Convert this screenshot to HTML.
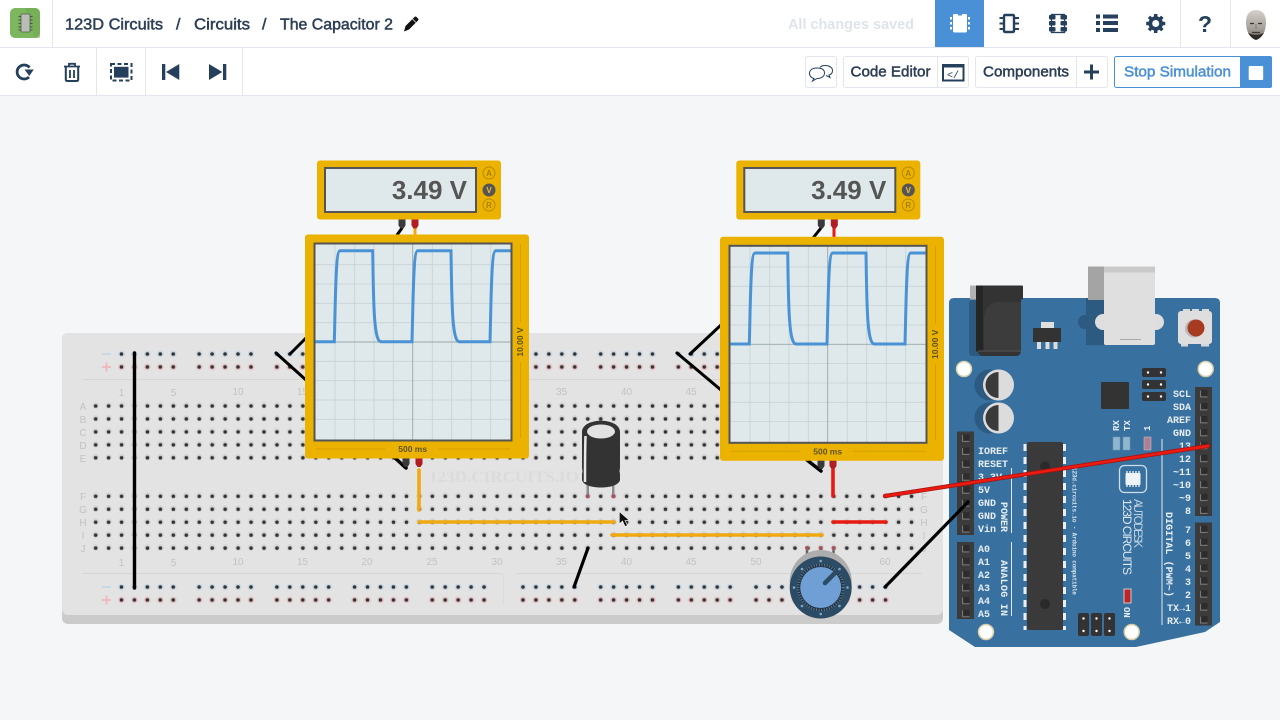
<!DOCTYPE html>
<html>
<head>
<meta charset="utf-8">
<title>123D Circuits</title>
<style>
html,body{margin:0;padding:0;background:#f5f6f8;width:1280px;height:720px;overflow:hidden}
svg{display:block}
.nav{font:16px "Liberation Sans",sans-serif;fill:#2c3e55;stroke:#2c3e55;stroke-width:.5}
.btn{font:15px "Liberation Sans",sans-serif;fill:#2c3e55;stroke:#2c3e55;stroke-width:.5}
.bb{font:10px "Liberation Sans",sans-serif;fill:#c2c2c2;text-anchor:middle}
.pin{font:bold 10px "Liberation Mono",monospace;fill:#e6edf3}
.r{text-anchor:end}
.met{font:bold 26px "Liberation Sans",sans-serif;fill:#555;text-anchor:end}
.mb{font:bold 8px "Liberation Sans",sans-serif;fill:#a87f00;text-anchor:middle}
.sc{font:bold 8.500px "Liberation Sans",sans-serif;fill:#5d5426;text-anchor:middle}
</style>
</head>
<body>
<svg width="1280" height="720" viewBox="0 0 1280 720" xmlns="http://www.w3.org/2000/svg">
<defs>
<linearGradient id="head" x1="0" y1="0" x2="0" y2="1"><stop offset="0" stop-color="#d6d0ca"/><stop offset=".6" stop-color="#a8a29c"/><stop offset="1" stop-color="#6e6964"/></linearGradient>
<pattern id="holes" patternUnits="userSpaceOnUse" x="89.2" y="399.5" width="12.95" height="12.95">
<circle cx="6.47" cy="6" r="3.2" fill="#d3d3d3"/><circle cx="6.47" cy="6.47" r="1.8" fill="#333"/>
</pattern>
<pattern id="holes2" patternUnits="userSpaceOnUse" x="89.2" y="489.8" width="12.95" height="12.95">
<circle cx="6.47" cy="6" r="3.2" fill="#d3d3d3"/><circle cx="6.47" cy="6.47" r="1.8" fill="#333"/>
</pattern>
<pattern id="railT" patternUnits="userSpaceOnUse" x="115" y="347.5" width="77.7" height="25.9">
<circle cx="6.47" cy="6.47" r="3.4" fill="#c9d8e4"/><circle cx="19.42" cy="6.47" r="3.4" fill="#c9d8e4"/><circle cx="32.37" cy="6.47" r="3.4" fill="#c9d8e4"/><circle cx="45.32" cy="6.47" r="3.4" fill="#c9d8e4"/><circle cx="58.27" cy="6.47" r="3.4" fill="#c9d8e4"/>
<circle cx="6.47" cy="19.42" r="3.4" fill="#e6c2c5"/><circle cx="19.42" cy="19.42" r="3.4" fill="#e6c2c5"/><circle cx="32.37" cy="19.42" r="3.4" fill="#e6c2c5"/><circle cx="45.32" cy="19.42" r="3.4" fill="#e6c2c5"/><circle cx="58.27" cy="19.42" r="3.4" fill="#e6c2c5"/>
<g fill="#333"><circle cx="6.47" cy="6.47" r="1.8"/><circle cx="19.42" cy="6.47" r="1.8"/><circle cx="32.37" cy="6.47" r="1.8"/><circle cx="45.32" cy="6.47" r="1.8"/><circle cx="58.27" cy="6.47" r="1.8"/>
<circle cx="6.47" cy="19.42" r="1.8"/><circle cx="19.42" cy="19.42" r="1.8"/><circle cx="32.37" cy="19.42" r="1.8"/><circle cx="45.32" cy="19.42" r="1.8"/><circle cx="58.27" cy="19.42" r="1.8"/></g>
</pattern>
<pattern id="railB" patternUnits="userSpaceOnUse" x="115" y="580.5" width="77.7" height="25.9">
<circle cx="6.47" cy="6.47" r="3.4" fill="#c9d8e4"/><circle cx="19.42" cy="6.47" r="3.4" fill="#c9d8e4"/><circle cx="32.37" cy="6.47" r="3.4" fill="#c9d8e4"/><circle cx="45.32" cy="6.47" r="3.4" fill="#c9d8e4"/><circle cx="58.27" cy="6.47" r="3.4" fill="#c9d8e4"/>
<circle cx="6.47" cy="19.42" r="3.4" fill="#e6c2c5"/><circle cx="19.42" cy="19.42" r="3.4" fill="#e6c2c5"/><circle cx="32.37" cy="19.42" r="3.4" fill="#e6c2c5"/><circle cx="45.32" cy="19.42" r="3.4" fill="#e6c2c5"/><circle cx="58.27" cy="19.42" r="3.4" fill="#e6c2c5"/>
<g fill="#333"><circle cx="6.47" cy="6.47" r="1.8"/><circle cx="19.42" cy="6.47" r="1.8"/><circle cx="32.37" cy="6.47" r="1.8"/><circle cx="45.32" cy="6.47" r="1.8"/><circle cx="58.27" cy="6.47" r="1.8"/>
<circle cx="6.47" cy="19.42" r="1.8"/><circle cx="19.42" cy="19.42" r="1.8"/><circle cx="32.37" cy="19.42" r="1.8"/><circle cx="45.32" cy="19.42" r="1.8"/><circle cx="58.27" cy="19.42" r="1.8"/></g>
</pattern>
<pattern id="hdr" patternUnits="userSpaceOnUse" width="17" height="12.95" x="0" y="0" patternTransform="translate(0 0.5)">
<rect width="17" height="12.95" fill="#3b3b3b"/><rect x="4.5" y="2.5" width="8" height="8" fill="#2c2c2c"/><path d="M5.5 3v6.5h7" fill="none" stroke="#777" stroke-width="1.2"/>
</pattern>
</defs>

<rect width="1280" height="720" fill="#f5f6f8"/>

<!-- BREADBOARD -->
<rect x="62" y="333" width="881" height="291" rx="6" fill="#cbcbcb"/>
<rect x="62" y="333" width="881" height="282" rx="6" fill="#e3e3e3"/>
<path d="M83 379.5H922M83 573.5H502M517 573.5H922" stroke="#d6d6d6" stroke-width="1"/>
<path d="M503.5 574V604" stroke="#dbdbdb"/>
<rect x="89.2" y="399.5" width="828.8" height="64.75" fill="url(#holes)"/>
<rect x="89.2" y="489.8" width="828.8" height="64.75" fill="url(#holes2)"/>
<rect x="115" y="347.5" width="388.5" height="25.9" fill="url(#railT)"/>
<rect x="115" y="580.5" width="388.5" height="25.9" fill="url(#railB)"/>
<g transform="translate(401.5 0)">
<rect x="115" y="347.5" width="388.5" height="25.9" fill="url(#railT)"/>
<rect x="115" y="580.5" width="388.5" height="25.9" fill="url(#railB)"/>
</g>
<path d="M102 354H111M102 587H111" stroke="#bcd3e6" stroke-width="1.6"/>
<path d="M102 367H111M106.500 362.500V371.500M102 600H111M106.500 595.500V604.500" stroke="#eeb6b8" stroke-width="1.8"/>
<g class="bb">
<text x="83" y="410">A</text><text x="83" y="423">B</text><text x="83" y="436">C</text><text x="83" y="449">D</text><text x="83" y="462">E</text>
<text x="83" y="500">F</text><text x="83" y="513">G</text><text x="83" y="526">H</text><text x="83" y="539">I</text><text x="83" y="552">J</text>
<text x="924" y="500">F</text><text x="924" y="513">G</text><text x="924" y="526">H</text><text x="924" y="539">I</text><text x="924" y="552">J</text>
<text x="121.500" y="396">1</text><text x="173.500" y="396">5</text><text x="238" y="395">10</text><text x="302.500" y="395">15</text><text x="561.500" y="395">35</text><text x="626.500" y="395">40</text><text x="691" y="395">45</text>
<text x="121.500" y="566">1</text><text x="173.500" y="566">5</text><text x="238" y="565">10</text><text x="302.500" y="565">15</text><text x="367" y="565">20</text><text x="432" y="565">25</text><text x="497" y="565">30</text><text x="561.500" y="565">35</text><text x="626.500" y="565">40</text><text x="691" y="565">45</text><text x="756" y="565">50</text><text x="885" y="565">60</text>
</g>
<text x="429" y="482" font-family="Liberation Serif,serif" font-weight="bold" font-size="16" fill="#dbdbdb" textLength="150" lengthAdjust="spacingAndGlyphs">123D.CIRCUITS.IO</text>

<!-- WIRES on board -->
<g fill="none" stroke-linecap="round">
<path d="M134.500 353V588" stroke="#000" stroke-width="3.400"/>
<path d="M290 354L306 338M276 353L306 380M690 354L721 325M677 353L721 390" stroke="#000" stroke-width="3"/>
<path d="M574 587L588 548" stroke="#000" stroke-width="3.200"/>
<path d="M419 470V510M419 522H614M612 535H822" stroke="#f0a910" stroke-width="3.600"/>
<path d="M833 470V496M833 522H886" stroke="#e81a10" stroke-width="3.600"/>
<path d="M394 457L406 468M807 460L821 471" stroke="#000" stroke-width="3.500"/>
</g>

<!-- CAPACITOR -->
<rect x="586.500" y="480" width="2.500" height="16" fill="#8c8c8c"/><rect x="612" y="480" width="2.500" height="16" fill="#8c8c8c"/>
<circle cx="587.700" cy="496.300" r="2" fill="#a5555f"/><circle cx="613.300" cy="496.300" r="2" fill="#a5555f"/>
<path d="M582 432C582 417 620 417 620 432V468L619.500 471L620 474V480C618 490 584 490 582 480V474L582.500 471L582 468Z" fill="#333"/>
<ellipse cx="601" cy="431.500" rx="14" ry="7" fill="#e2e2e2"/>
<path d="M585.500 436C585 450 585 465 585 482" stroke="#e8e8e8" stroke-width="2.500" fill="none"/>

<!-- POTENTIOMETER -->
<path d="M807 550V565M821 549V565M833.500 550V565" stroke="#666" stroke-width="2.500"/>
<circle cx="807" cy="548" r="2" fill="#a5555f"/><circle cx="820.700" cy="548" r="2" fill="#a5555f"/><circle cx="833.700" cy="548" r="2" fill="#a5555f"/>
<circle cx="820.700" cy="581" r="31" fill="#adadad"/>
<circle cx="820.700" cy="587.500" r="31" fill="#2c4c66"/>
<circle cx="820.700" cy="587.500" r="23.500" fill="#1f3344"/>
<circle cx="820.700" cy="587.500" r="22.500" fill="none" stroke="#8fa9bd" stroke-width="2.500" stroke-dasharray="1 1.600" opacity=".6"/>
<circle cx="820.700" cy="587.500" r="20.500" fill="#6f9fd5"/>
<path d="M825 583L838 570" stroke="#2c4c66" stroke-width="4.500" stroke-linecap="round"/>
<g fill="#7fa6c4"><circle cx="820.700" cy="561" r="1.300"/><circle cx="820.700" cy="614" r="1.300"/><circle cx="794" cy="587.500" r="1.300"/><circle cx="847.500" cy="587.500" r="1.300"/><circle cx="802" cy="569" r="1.300"/><circle cx="839.500" cy="569" r="1.300"/><circle cx="802" cy="606" r="1.300"/><circle cx="839.500" cy="606" r="1.300"/></g>

<!-- ARDUINO -->
<path d="M949 303Q949 298 954 298H1215Q1220 298 1220 303V622L1205 632L1136 647H975L949 630Z" fill="#38709f"/>
<circle cx="1085" cy="322" r="7" fill="#2c5a80"/>
<rect x="1086" y="298" width="18" height="47" fill="#2c5a80"/>
<circle cx="1103" cy="322" r="8" fill="#dedede"/><circle cx="1156" cy="322" r="8" fill="#dedede"/>
<rect x="1088" y="266.500" width="18" height="33.500" fill="#a4a4a4"/>
<rect x="1104" y="266.500" width="51" height="78.500" rx="2" fill="#dfdfdf"/>
<rect x="1104" y="266.500" width="51" height="6" fill="#c9c9c9"/>
<path d="M1120 339.500H1141" stroke="#a8a8a8"/>
<!-- jack -->
<rect x="969" y="300" width="30" height="56" rx="3" fill="#2c5a80"/>
<rect x="970" y="285.500" width="12" height="14" fill="#b2b2b2"/>
<rect x="976" y="285.500" width="47" height="14" rx="1" fill="#333"/>
<path d="M978 299H1021V350Q1021 356 1016 356H983Q978 356 978 350Z" fill="#333"/>
<rect x="976" y="285.500" width="7" height="66" fill="#252525"/>
<path d="M984 350V320Q984 302 1000 302H1021V350Z" fill="#3c3c3c"/>
<path d="M978 351H1021" stroke="#666" stroke-width=".8"/>
<!-- regulator -->
<rect x="1041" y="322" width="13" height="7" fill="#dfdfdf"/>
<rect x="1033" y="328" width="28" height="14" fill="#333"/>
<path d="M1039 342v7M1047.500 342v7M1055.500 342v7" stroke="#ddd" stroke-width="4"/>
<!-- reset -->
<path d="M1183 309h7v3h-7zM1192 309h7v3h-7zM1202 309h7v3h-7zM1181 343h7v3.500h-7zM1201 343h8v3.500h-8z" fill="#d8d8d8"/>
<rect x="1178" y="311" width="34" height="33" rx="3" fill="#dedede"/>
<circle cx="1194" cy="328.500" r="9" fill="#bababa"/><circle cx="1196" cy="328" r="8.500" fill="#a63b22"/>
<!-- mount holes -->
<g fill="#fff" stroke="#d6cfa8" stroke-width="1.500"><circle cx="964" cy="369" r="7.500"/><circle cx="1205.700" cy="369" r="7.500"/><circle cx="986" cy="632" r="7.500"/><circle cx="1131.700" cy="632" r="7.500"/></g>
<!-- caps -->
<circle cx="990" cy="385" r="15.500" fill="#2c5a80"/><circle cx="990" cy="418" r="15.500" fill="#2c5a80"/>
<circle cx="998.500" cy="385" r="15.500" fill="#dcdcdc"/><path d="M998.500 372A13 13 0 0 0 998.500 398Z" fill="#3a3a3a"/>
<circle cx="998.500" cy="418" r="15.500" fill="#dcdcdc"/><path d="M998.500 405A13 13 0 0 0 998.500 431Z" fill="#3a3a3a"/>
<!-- small chip, headers -->
<rect x="1101" y="382" width="28" height="27" rx="1" fill="#333"/>
<g fill="#333"><rect x="1142" y="368" width="24" height="9" rx="2"/><rect x="1142" y="380" width="24" height="9" rx="2"/><rect x="1142" y="392" width="24" height="9" rx="2"/></g>
<g fill="#fff"><circle cx="1148" cy="372.500" r="1.200"/><circle cx="1161" cy="372.500" r="1.200"/><circle cx="1148" cy="384.500" r="1.200"/><circle cx="1161" cy="384.500" r="1.200"/><circle cx="1148" cy="396.500" r="1.200"/><circle cx="1161" cy="396.500" r="1.200"/></g>
<!-- pin headers -->
<g transform="translate(1195 387)"><rect width="17" height="129" fill="url(#hdr)"/></g>
<g transform="translate(1195 522.500)"><rect width="17" height="103" fill="url(#hdr)"/></g>
<g transform="translate(957 431.500)"><rect width="17" height="103.500" fill="url(#hdr)"/></g>
<g transform="translate(957 542)"><rect width="17" height="77" fill="url(#hdr)"/></g>
<!-- main chip -->
<path d="M1025 444V630M1064.500 444V630" stroke="#e8eef2" stroke-width="3" stroke-dasharray="7 6"/>
<rect x="1027" y="442" width="36" height="188" rx="2" fill="#3a3a3a"/>
<circle cx="1045" cy="466.500" r="5" fill="#2a2a2a"/><circle cx="1045" cy="604" r="5" fill="#2a2a2a"/>
<!-- leds -->
<rect x="1113" y="437" width="7" height="13" fill="#8fb6cd" stroke="#6c98b4" stroke-width=".5"/><rect x="1123" y="437" width="7" height="13" fill="#8fb6cd" stroke="#6c98b4" stroke-width=".5"/>
<rect x="1144" y="437" width="7" height="13" fill="#ae7f93" stroke="#ccc" stroke-width=".5"/>
<rect x="1124" y="589" width="7" height="14" fill="#c02424" stroke="#ccc" stroke-width="1"/>
<!-- bottom headers -->
<g fill="#333"><rect x="1078" y="613" width="11" height="23" rx="2"/><rect x="1091" y="613" width="11" height="23" rx="2"/><rect x="1104" y="613" width="11" height="23" rx="2"/></g>
<g fill="#fff"><circle cx="1083.500" cy="618.500" r="1.200"/><circle cx="1083.500" cy="631" r="1.200"/><circle cx="1096.500" cy="618.500" r="1.200"/><circle cx="1096.500" cy="631" r="1.200"/><circle cx="1109.500" cy="618.500" r="1.200"/><circle cx="1109.500" cy="631" r="1.200"/></g>
<path d="M1162 439V625M1011.500 468V533M1011.500 542V616" stroke="#dfe8ef" stroke-width="1"/>
<!-- logo -->
<rect x="1119.500" y="465.500" width="27" height="27" rx="5" fill="none" stroke="#cfdde8" stroke-width="1.300"/>
<rect x="1125.500" y="473" width="15" height="12" rx="1" fill="#eef3f7"/>
<path d="M1127 471v16M1130 471v16M1133 471v16M1136 471v16M1139 471v16" stroke="#eef3f7" stroke-width="1.300" stroke-dasharray="2 12"/>
<!-- labels -->
<g class="pin r">
<text x="1191" y="397">SCL</text><text x="1191" y="410">SDA</text><text x="1191" y="423">AREF</text><text x="1191" y="436">GND</text><text x="1191" y="449">13</text><text x="1191" y="462">12</text><text x="1191" y="475">~11</text><text x="1191" y="488">~10</text><text x="1191" y="501">~9</text><text x="1191" y="514">8</text>
<text x="1191" y="533">7</text><text x="1191" y="546">6</text><text x="1191" y="559">5</text><text x="1191" y="572">4</text><text x="1191" y="585">3</text><text x="1191" y="598">2</text><text x="1191" y="611">TX→1</text><text x="1191" y="624">RX←0</text>
</g>
<g class="pin">
<text x="978" y="454">IOREF</text><text x="978" y="467">RESET</text><text x="978" y="480">3.3V</text><text x="978" y="493">5V</text><text x="978" y="506">GND</text><text x="978" y="519">GND</text><text x="978" y="532">Vin</text>
<text x="978" y="552">A0</text><text x="978" y="565">A1</text><text x="978" y="578">A2</text><text x="978" y="591">A3</text><text x="978" y="604">A4</text><text x="978" y="617">A5</text>
<text transform="translate(1001 502) rotate(90)">POWER</text>
<text transform="translate(1001 560) rotate(90)" textLength="56">ANALOG IN</text>
<text transform="translate(1166 512) rotate(90)" textLength="85">DIGITAL (PWM~)</text>
<text transform="translate(1124 607) rotate(90)" font-size="9">ON</text>
<text transform="translate(1119 431) rotate(-90)" font-size="9">RX</text>
<text transform="translate(1130 431) rotate(-90)" font-size="9">TX</text>
<text transform="translate(1150 431) rotate(-90)" font-size="9">1</text>
</g>
<text transform="translate(1072.500 467) rotate(90)" font-family="Liberation Mono,monospace" font-weight="bold" font-size="6" fill="#d7e3ec" textLength="128">123d.circuits.io - Arduino compatible</text>
<text transform="translate(1134 499) rotate(90)" font-family="Liberation Sans,sans-serif" font-size="11.500" fill="#bfd2e0" textLength="49">AUTODESK</text>
<text transform="translate(1123 499) rotate(90)" font-family="Liberation Sans,sans-serif" font-size="12" fill="#dfe9f0" textLength="76">123D CIRCUITS</text>

<!-- wires over arduino -->
<path d="M885 587L968 502" stroke="#000" stroke-width="3.200" stroke-linecap="round" fill="none"/>
<path d="M885 496L1208 446" stroke="#a31410" stroke-width="4.200" stroke-linecap="round"/>
<path d="M885 496L1208 446" stroke="#ee1a10" stroke-width="2.600" stroke-linecap="round"/>

<!-- probes -->
<path d="M402 228L397 235" stroke="#000" stroke-width="3"/>
<path d="M415 228V236" stroke="#f0a910" stroke-width="3"/>
<path d="M821 228L813 238" stroke="#000" stroke-width="3"/>
<path d="M834 228V238" stroke="#e81a10" stroke-width="3"/>
<path d="M398.500 219.500h7v6l-2 3h-3l-2-3z" fill="#3a3a3a"/><path d="M411.500 219.500h7v6l-2 3h-3l-2-3z" fill="#b01e24"/>
<path d="M817.800 219.500h7v6l-2 3h-3l-2-3z" fill="#3a3a3a"/><path d="M830.800 219.500h7v6l-2 3h-3l-2-3z" fill="#b01e24"/>
<path d="M402.500 458h7v6l-2 3h-3l-2-3z" fill="#3a3a3a"/><path d="M415.500 458h7v6l-2 3h-3l-2-3z" fill="#b01e24"/>
<path d="M817.500 460h7v6l-2 3h-3l-2-3z" fill="#3a3a3a"/><path d="M829.500 460h7v6l-2 3h-3l-2-3z" fill="#b01e24"/>

<!-- METERS -->
<rect x="317" y="160.500" width="184" height="59" rx="3" fill="#ecb200"/>
<rect x="325" y="168" width="151" height="44" fill="#dfe8ea" stroke="#555" stroke-width="2"/>
<text class="met" x="467" y="199">3.49 V</text>
<g fill="none" stroke="#b88a00" stroke-width="1"><circle cx="489" cy="173" r="6"/><circle cx="489" cy="205" r="6"/></g>
<circle cx="489" cy="190" r="6.500" fill="#555"/>
<text class="mb" x="489" y="176">A</text><text class="mb" x="489" y="193" style="fill:#e8c040">V</text><text class="mb" x="489" y="208">R</text>

<rect x="736.300" y="160.500" width="184" height="59" rx="3" fill="#ecb200"/>
<rect x="744.300" y="168" width="151" height="44" fill="#dfe8ea" stroke="#555" stroke-width="2"/>
<text class="met" x="886.300" y="199">3.49 V</text>
<g fill="none" stroke="#b88a00" stroke-width="1"><circle cx="908.300" cy="173" r="6"/><circle cx="908.300" cy="205" r="6"/></g>
<circle cx="908.300" cy="190" r="6.500" fill="#555"/>
<text class="mb" x="908.300" y="176">A</text><text class="mb" x="908.300" y="193" style="fill:#e8c040">V</text><text class="mb" x="908.300" y="208">R</text>

<!-- SCOPE 1 -->
<rect x="305" y="234.500" width="224" height="224" rx="3" fill="#ecb200"/>
<rect x="314.500" y="243.500" width="197" height="197" fill="#dfe8ea"/>
<path d="M335 244V440M354.700 244V440M374 244V440M393.300 244V440M432.300 244V440M451.700 244V440M471.300 244V440M490.700 244V440M315 264.700H511M315 284H511M315 303.300H511M315 322.700H511M315 361.300H511M315 380.700H511M315 400H511M315 419.300H511" stroke="#c6d2d5" stroke-width=".8"/>
<path d="M412.700 244V440M315 342H511" stroke="#9aa7a9" stroke-width=".9"/>
<rect x="314.500" y="243.500" width="197" height="197" fill="none" stroke="#555" stroke-width="2"/>
<path d="M315.500 341.700H334.300C335.500 300 335.500 250.700 340 250.700H372.700C373.500 300 373.500 341.700 381 341.700H412C413.200 300 413.200 250.700 417.700 250.700H451C451.800 300 451.800 341.700 459.300 341.700H490C491.200 300 491.200 250.700 495.700 250.700H510.500" fill="none" stroke="#4a92d6" stroke-width="3"/>
<path d="M520.500 244V322M520.500 362V438M316 449H385M438 449H510" stroke="#d2a000" stroke-width="1"/>
<text class="sc" x="412.700" y="452">500 ms</text>
<text class="sc" transform="translate(523 342) rotate(-90)">10.00 V</text>

<!-- SCOPE 2 -->
<rect x="720" y="236.800" width="224" height="224" rx="3" fill="#ecb200"/>
<rect x="729.500" y="245.800" width="197" height="197" fill="#dfe8ea"/>
<g transform="translate(415 2.300)">
<path d="M335 244V440M354.700 244V440M374 244V440M393.300 244V440M432.300 244V440M451.700 244V440M471.300 244V440M490.700 244V440M315 264.700H511M315 284H511M315 303.300H511M315 322.700H511M315 361.300H511M315 380.700H511M315 400H511M315 419.300H511" stroke="#c6d2d5" stroke-width=".8"/>
<path d="M412.700 244V440M315 342H511" stroke="#9aa7a9" stroke-width=".9"/>
<rect x="314.500" y="243.500" width="197" height="197" fill="none" stroke="#555" stroke-width="2"/>
<path d="M315.500 341.700H334.300C335.500 300 335.500 250.700 340 250.700H372.700C373.500 300 373.500 341.700 381 341.700H412C413.200 300 413.200 250.700 417.700 250.700H451C451.800 300 451.800 341.700 459.300 341.700H490C491.200 300 491.200 250.700 495.700 250.700H510.500" fill="none" stroke="#4a92d6" stroke-width="3"/>
<path d="M520.500 244V322M520.500 362V438M316 449H385M438 449H510" stroke="#d2a000" stroke-width="1"/>
<text class="sc" x="412.700" y="452">500 ms</text>
<text class="sc" transform="translate(523 342) rotate(-90)">10.00 V</text>
</g>

<!-- CURSOR -->
<path d="M619.300 511.500V524L622.500 521L625 526.500L627.500 525.500L625 520.500L629 520Z" fill="#111" stroke="#fff" stroke-width=".6"/>

<!-- TOOLBARS -->
<rect x="0" y="0" width="1280" height="47" fill="#fff"/>
<rect x="0" y="48" width="1280" height="47" fill="#fff"/>
<path d="M0 47.500H1280M0 95.500H1280" stroke="#e3e6ec" stroke-width="1"/>
<path d="M52.500 0V47M96.500 48V95M145.500 48V95M242.500 48V95M1180.500 0V47M1230.500 0V47" stroke="#e3e6ec" stroke-width="1"/>

<!-- app icon -->
<rect x="10" y="8" width="30" height="30" rx="5" fill="#7cb65e"/>
<path d="M25 8H35Q40 8 40 13V38H35Z" fill="#6fa851" opacity=".5"/>
<rect x="21" y="14" width="9" height="18" rx="1" fill="#b8bdb5" stroke="#55604f" stroke-width=".8"/>
<path d="M18.500 16.500h2.500M18.500 20h2.500M18.500 23.500h2.500M18.500 27h2.500M18.500 30h2.500M30 16.500h2.500M30 20h2.500M30 23.500h2.500M30 27h2.500M30 30h2.500" stroke="#49523f" stroke-width="1"/>

<text class="nav" x="65" y="29.500" textLength="98" lengthAdjust="spacingAndGlyphs">123D Circuits</text>
<text class="nav" x="176" y="29.500">/</text>
<text class="nav" x="194" y="29.500" textLength="56" lengthAdjust="spacingAndGlyphs">Circuits</text>
<text class="nav" x="262" y="29.500">/</text>
<text class="nav" x="280" y="29.500" textLength="113" lengthAdjust="spacingAndGlyphs">The Capacitor 2</text>
<path d="M404 31.500L405.500 26L414.500 17Q415.500 16 416.500 17L418 18.500Q419 19.500 418 20.500L409 29.500Z" fill="#111"/>
<path d="M412.500 19L416 22.500" stroke="#fff" stroke-width=".7"/>
<text x="788" y="29" font-family="Liberation Sans,sans-serif" font-weight="bold" font-size="15" fill="#dfe4ea" textLength="126" lengthAdjust="spacingAndGlyphs">All changes saved</text>

<!-- left tool icons -->
<path d="M29.500 67.500A7 7 0 1 0 29 77" fill="none" stroke="#24405c" stroke-width="2.800"/>
<path d="M24.500 69.500H33.800L29.300 76Z" fill="#24405c"/>
<path d="M64 66.500H80M69 66V63.800H75V66" fill="none" stroke="#24405c" stroke-width="1.800"/>
<path d="M65.800 67V79.500Q65.800 81 67.500 81H76.500Q78.200 81 78.200 79.500V67" fill="none" stroke="#24405c" stroke-width="2"/>
<path d="M70 70V78M74 70V78" stroke="#24405c" stroke-width="1.800"/>
<rect x="111" y="64" width="20.500" height="16.500" fill="none" stroke="#24405c" stroke-width="2" stroke-dasharray="4 2.500"/>
<rect x="114" y="66.800" width="14.500" height="10.800" fill="#24405c"/>
<path d="M162 64h3.300v16h-3.300zM179.300 64V80L166 72Z" fill="#24405c"/>
<path d="M209 64V80L222.300 72ZM223 64h3.300v16H223z" fill="#24405c"/>

<!-- top right icons -->
<rect x="935" y="0" width="49" height="47" fill="#4a90d6"/>
<path d="M954.500 14H958V15.500H962V14H965.500Q967 14 967 15.500V31Q967 32.500 965.500 32.500H954.500Q953 32.500 953 31V15.500Q953 14 954.500 14Z" fill="#fff"/>
<path d="M951 17v2.500M951 22v2.500M951 27v2.500M969 17v2.500M969 22v2.500M969 27v2.500" stroke="#fff" stroke-width="2"/>

<rect x="1004" y="15" width="10" height="17" rx="1" fill="none" stroke="#24405c" stroke-width="2.400"/>
<path d="M999.500 18h4M999.500 23.500h4M999.500 29h4M1014.500 18h4.500M1014.500 23.500h4.500M1014.500 29h4.500" stroke="#24405c" stroke-width="2"/>

<rect x="1051.500" y="14.500" width="13" height="18" fill="none" stroke="#24405c" stroke-width="1.300"/>
<g fill="#24405c">
<rect x="1049" y="15" width="6.500" height="4.500" rx="1"/><rect x="1049" y="21" width="6.500" height="4.500" rx="1"/><rect x="1049" y="27" width="6.500" height="4.500" rx="1"/>
<rect x="1060.500" y="15" width="6.500" height="4.500" rx="1"/><rect x="1060.500" y="21" width="6.500" height="4.500" rx="1"/><rect x="1060.500" y="27" width="6.500" height="4.500" rx="1"/>
</g>

<path d="M1096 14.500h4v4h-4zM1103 14.500h15v4h-15zM1096 21h4v4h-4zM1103 21h15v4h-15zM1096 28h4v4h-4zM1103 28h15v4h-15z" fill="#24405c"/>

<g fill="none" stroke="#24405c">
<circle cx="1155.700" cy="23.500" r="5.400" stroke-width="3.800"/>
<path d="M1155.700 14V33M1146.200 23.500H1165.200M1149 16.800L1162.400 30.200M1149 30.200L1162.400 16.800" stroke-width="3.400" stroke-dasharray="3 13"/>
</g>
<text x="1205" y="32" text-anchor="middle" font-family="Liberation Sans,sans-serif" font-weight="bold" font-size="23" fill="#24405c">?</text>

<!-- avatar -->
<path d="M1246 22C1246 14 1250 10 1256 10C1262 10 1266 14 1266 22C1266 30 1263 38 1256 40C1249 38 1246 30 1246 22Z" fill="url(#head)"/>
<path d="M1248 33Q1252 39 1256 40Q1260 39 1264 33Q1256 36.500 1248 33Z" fill="#2e2a28"/>
<path d="M1250 23.500h4M1258 23.500h4M1252 32.500h8" stroke="#3a3634" stroke-width="1.200"/>
<path d="M1256 24v5" stroke="#7f7a76"/>

<!-- right buttons -->
<g fill="#fff" stroke="#e3e6ec">
<rect x="805.500" y="56.500" width="31" height="31" rx="2"/>
<rect x="843.500" y="56.500" width="125" height="31" rx="2"/>
<rect x="975.500" y="56.500" width="132" height="31" rx="2"/>
</g>
<path d="M937.500 57V87M1076.500 57V87" stroke="#e3e6ec"/>
<path d="M817 68C811 68 809.500 71 809.500 73.500C809.500 76 811.500 78 814 78.500L812.500 81L817 78.500C822 78.500 824.500 76 824.500 73C824.500 70 822 68 817 68Z" fill="#fff" stroke="#24405c" stroke-width="1"/>
<path d="M820 67.500C821 66 823 65.500 825 65.500C830 65.500 832.500 68 832.500 70.500C832.500 73 831 74.500 829 75L830 77.500L826 75.500" fill="none" stroke="#24405c" stroke-width="1"/>
<text class="btn" x="850.500" y="76.500" textLength="80" lengthAdjust="spacingAndGlyphs">Code Editor</text>
<rect x="943" y="65" width="20.500" height="15.500" fill="none" stroke="#24405c" stroke-width="2"/>
<rect x="943" y="64" width="20.500" height="3.500" fill="#24405c"/>
<text x="953" y="78" text-anchor="middle" font-family="Liberation Mono,monospace" font-size="10" fill="#24405c">&lt;/</text>
<text class="btn" x="983" y="76.500" textLength="86" lengthAdjust="spacingAndGlyphs">Components</text>
<path d="M1084 72H1099M1091.500 64.500V79.500" stroke="#24405c" stroke-width="3"/>
<rect x="1114.500" y="56.500" width="157" height="31" rx="2" fill="#fff" stroke="#4a90d6"/>
<path d="M1240 56H1270Q1272 56 1272 58V86Q1272 88 1270 88H1240Z" fill="#4a90d6"/>
<rect x="1248.700" y="66" width="14.500" height="14" rx="1" fill="#fff"/>
<text x="1124" y="76.500" font-family="Liberation Sans,sans-serif" font-size="15" fill="#4a90d6" stroke="#4a90d6" stroke-width=".5" textLength="107" lengthAdjust="spacingAndGlyphs">Stop Simulation</text>
</svg>
</body>
</html>
